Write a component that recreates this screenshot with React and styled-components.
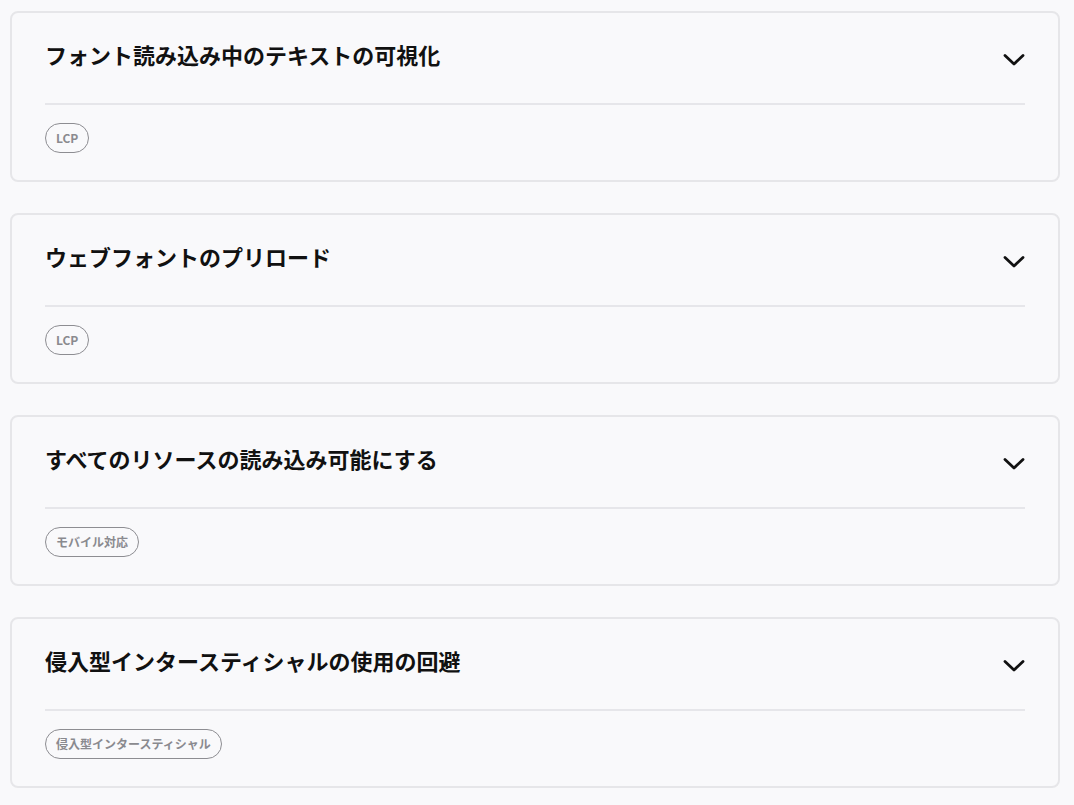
import React from 'react';
import styled, { createGlobalStyle } from 'styled-components';

const GlobalStyle = createGlobalStyle`
  html, body {
    margin: 0;
    padding: 0;
    background-color: #f9f9fb;
  }
  body {
    font-family: "Noto Sans CJK JP", "Noto Sans", sans-serif;
  }
`;

const List = styled.div`
  display: flex;
  flex-direction: column;
  gap: 31px;
  padding: 11px 14px 20px 10px;
`;

const Card = styled.section`
  background-color: #f9f9fb;
  border: 2px solid #e6e6e9;
  border-radius: 8px;
  padding: 0 33px 27px 33px;
`;

const Header = styled.div`
  display: flex;
  align-items: flex-start;
  justify-content: space-between;
  box-sizing: border-box;
  height: 92px;
  padding-top: 25px;
  border-bottom: 2px solid #e6e6ea;
`;

const Title = styled.h2`
  margin: 0;
  font-size: 22px;
  font-weight: 700;
  line-height: 32px;
  color: #111;
`;

const Toggle = styled.button`
  display: flex;
  align-items: center;
  justify-content: center;
  border: none;
  background: none;
  padding: 0;
  margin-top: 15px;
  width: 22px;
  height: 14px;
  cursor: pointer;
`;

const Tags = styled.div`
  display: flex;
  gap: 8px;
  padding-top: 18px;
`;

const Tag = styled.span`
  display: inline-flex;
  align-items: center;
  box-sizing: border-box;
  height: 30px;
  padding: 0 10px;
  border: 1px solid #8d8d92;
  border-radius: 15px;
  font-size: 12px;
  font-weight: 700;
  color: #8a8a8f;
  line-height: 1;
`;

const Chevron = () => (
  <svg width="22" height="14" viewBox="0 0 22 14" fill="none">
    <polyline
      points="2,2.5 11,11 20,2.5"
      stroke="#111"
      strokeWidth="2.8"
      strokeLinecap="round"
      strokeLinejoin="round"
    />
  </svg>
);

const items = [
  { title: 'フォント読み込み中のテキストの可視化', tags: ['LCP'] },
  { title: 'ウェブフォントのプリロード', tags: ['LCP'] },
  { title: 'すべてのリソースの読み込み可能にする', tags: ['モバイル対応'] },
  { title: '侵入型インタースティシャルの使用の回避', tags: ['侵入型インタースティシャル'] },
];

const App = () => (
  <>
    <GlobalStyle />
    <List>
      {items.map((item) => (
        <Card key={item.title}>
          <Header>
            <Title>{item.title}</Title>
            <Toggle aria-label="開く">
              <Chevron />
            </Toggle>
          </Header>
          <Tags>
            {item.tags.map((t) => (
              <Tag key={t}>{t}</Tag>
            ))}
          </Tags>
        </Card>
      ))}
    </List>
  </>
);

export default App;
